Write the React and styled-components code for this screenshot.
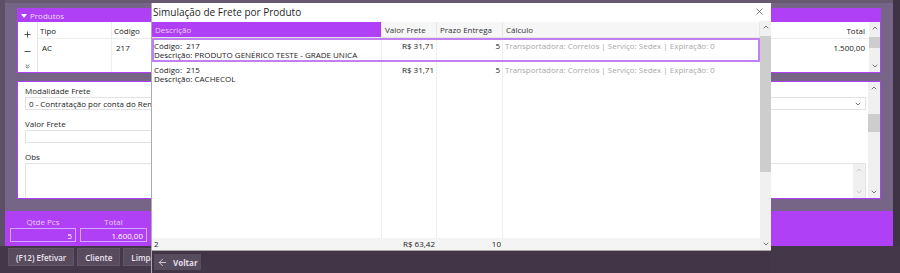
import styled, { createGlobalStyle } from "styled-components";
import { X, ChevronUp, ChevronDown, ChevronsDown, ArrowLeft, Plus, Minus } from "lucide-react";

const GlobalStyle = createGlobalStyle`
  body {
    margin: 0;
    font-family: "Open Sans", "Noto Sans", sans-serif;
  }
  * { box-sizing: border-box; }
`;

const purple = "#b040f5";

const Screen = styled.div`
  position: relative;
  width: 900px;
  height: 273px;
  overflow: hidden;
  display: flex;
  flex-direction: column;
  background: #45374a;
`;

const TopArea = styled.div`
  display: flex;
  height: 246px;
  flex: none;
`;

const LeftRail = styled.div`
  width: 5px;
  background: #5d4f65;
`;

const RightRail = styled.div`
  width: 7px;
  background: #3f3346;
`;

const Workspace = styled.div`
  flex: 1;
  display: flex;
  flex-direction: column;
  background: #766587;
  border-top: 3px solid #67596f;
`;

const Sections = styled.div`
  padding: 5px 12px 0 12px;
  display: flex;
  flex-direction: column;
  gap: 8px;
`;

const Panel = styled.div`
  border: 1px solid ${purple};
  background: #fff;
  display: flex;
  flex-direction: column;
`;

const PanelHeader = styled.div`
  height: 13px;
  background: ${purple};
  color: #f0dcff;
  font-size: 8px;
  display: flex;
  align-items: center;
  gap: 3px;
  padding-left: 3px;
`;

const Triangle = styled.span`
  width: 0;
  height: 0;
  border-left: 3px solid transparent;
  border-right: 3px solid transparent;
  border-top: 4px solid #fff;
`;

const ProductBody = styled.div`
  height: 50px;
  display: flex;
`;

const RowTools = styled.div`
  width: 20px;
  border-right: 1px solid #e4e4e4;
  display: flex;
  flex-direction: column;
  align-items: center;
  justify-content: space-between;
  padding: 8px 0 2px;
  color: #333;
`;

const ProductGrid = styled.div`
  flex: 1;
  display: grid;
  grid-template-columns: 74px 1fr 120px;
  grid-template-rows: 17px 1fr;
  font-size: 8px;
  color: #1a1a1a;
`;

const ProdHead = styled.div`
  display: flex;
  align-items: center;
  padding: 0 ${(p) => (p.$right ? "4px" : "2px")};
  justify-content: ${(p) => (p.$right ? "flex-end" : "flex-start")};
  border-bottom: 1px solid #ececec;
  border-right: ${(p) => (p.$sep ? "1px solid #ececec" : "none")};
`;

const ProdCell = styled.div`
  padding: 3px 4px 0;
  text-align: ${(p) => (p.$right ? "right" : "left")};
  border-right: ${(p) => (p.$sep ? "1px solid #ececec" : "none")};
`;

const ScrollTrack = styled.div`
  width: ${(p) => p.$w || 11}px;
  background: #f0f0f0;
  display: flex;
  flex-direction: column;
  align-items: center;
  justify-content: space-between;
  padding: 2px 0;
  color: ${(p) => (p.$faint ? "#b8b8b8" : "#555")};
  position: relative;
`;

const Thumb = styled.div`
  position: absolute;
  left: 0;
  right: 0;
  top: ${(p) => p.$top}px;
  height: ${(p) => p.$h}px;
  background: #cdcdcd;
`;

const FormBody = styled.div`
  height: 116px;
  display: flex;
`;

const FormMain = styled.div`
  flex: 1;
  padding: 3px 2px 0 7px;
  display: flex;
  flex-direction: column;
`;

const Label = styled.div`
  font-size: 8px;
  color: #1f1f1f;
  height: 11px;
  line-height: 11px;
  margin-bottom: 1px;
`;

const Field = styled.div`
  height: 13px;
  width: ${(p) => p.$w || "100%"};
  border: 1px solid #e2e2e2;
  font-size: 8px;
  color: #1a1a1a;
  display: flex;
  align-items: center;
  justify-content: space-between;
  padding: 0 3px;
  margin-bottom: 8px;
`;

const TextArea = styled.div`
  flex: 1;
  border: 1px solid #e2e2e2;
  border-bottom: none;
  display: flex;
  justify-content: flex-end;
`;

const TotalsBar = styled.div`
  margin-top: auto;
  height: 35px;
  background: ${purple};
  display: flex;
  gap: 4px;
  padding: 5px 0 0 5px;
`;

const TotalGroup = styled.div`
  width: ${(p) => p.$w}px;
  display: flex;
  flex-direction: column;
  align-items: center;
`;

const TotalLabel = styled.div`
  font-size: 8px;
  color: #e8ccff;
  height: 11px;
  line-height: 11px;
  margin-bottom: 1px;
`;

const TotalInput = styled.div`
  width: 100%;
  height: 14px;
  border: 1px solid #d9a6ff;
  color: #fff;
  font-size: 8px;
  text-align: right;
  padding: 1px 3px;
`;

const Toolbar = styled.div`
  display: flex;
  gap: 3px;
  padding: 2px 8px;
`;

const ToolButton = styled.div`
  height: 18px;
  padding: 0 7px;
  background: #584b5e;
  border: 1px solid #62556a;
  color: #ece4f0;
  font-size: 8px;
  font-weight: 600;
  display: flex;
  align-items: center;
  white-space: nowrap;
`;

/* modal */

const Modal = styled.div`
  position: absolute;
  left: 151px;
  top: 3px;
  width: 620px;
  height: 270px;
  display: flex;
  flex-direction: column;
  background: #433548;
  border-left: 1px solid #b0a8b4;
`;

const TitleBar = styled.div`
  height: 18px;
  background: #fff;
  display: flex;
  align-items: center;
  justify-content: space-between;
  padding: 0 6px 0 1px;
  font-size: 10px;
  color: #1f1f1f;
`;

const ModalBody = styled.div`
  height: 232px;
  display: flex;
  background: #fff;
  border-bottom: 1px solid #a8a8a8;
`;

const Grid = styled.div`
  flex: 1;
  display: flex;
  flex-direction: column;
  padding-top: 1px;
`;

const Row = styled.div`
  display: grid;
  grid-template-columns: 230px 55px 66px 1fr;
  height: ${(p) => p.$h}px;
  flex: ${(p) => (p.$fill ? 1 : "none")};
  background: ${(p) => p.$bg || "transparent"};
  outline: ${(p) => (p.$selected ? "2px solid #c27ff2" : "none")};
  outline-offset: -2px;
  font-size: 8px;
  color: #1a1a1a;
`;

const HeadCell = styled.div`
  display: flex;
  align-items: center;
  padding: 0 3px;
  background: ${(p) => (p.$active ? purple : "#f6f6f6")};
  color: ${(p) => (p.$active ? "#ead2ff" : "#333")};
  border-right: 1px solid #e6e6e6;
  border-bottom: 1px solid #e6e6e6;
`;

const Cell = styled.div`
  padding: ${(p) => (p.$tight ? "0 2px" : "3px 2px 0 2px")};
  display: flex;
  flex-direction: column;
  align-items: ${(p) => (p.$right ? "flex-end" : "flex-start")};
  justify-content: ${(p) => (p.$tight ? "center" : "flex-start")};
  line-height: 9.5px;
  color: ${(p) => (p.$muted ? "#a8a8a8" : "#1a1a1a")};
  border-right: ${(p) => (p.$sep ? "1px solid #efefef" : "none")};
  white-space: nowrap;
  overflow: hidden;
`;

const ModalFooter = styled.div`
  flex: 1;
  padding: 3px 2px;
`;

const BackButton = styled.div`
  width: 47px;
  height: 16px;
  background: #574b5e;
  color: #e4dde8;
  font-size: 8px;
  font-weight: 700;
  display: flex;
  align-items: center;
  gap: 5px;
  padding-left: 3px;
`;

const rows = [
  { codigo: "217", desc: "PRODUTO GENÉRICO TESTE - GRADE UNICA", valor: "R$ 31,71", prazo: "5", selected: true },
  { codigo: "215", desc: "CACHECOL", valor: "R$ 31,71", prazo: "5" },
];

const calculo = "Transportadora: Correios | Serviço: Sedex | Expiração: 0";

export default function App() {
  return (
    <Screen>
      <GlobalStyle />
      <TopArea>
        <LeftRail />
        <Workspace>
          <Sections>
            <Panel>
              <PanelHeader>
                <Triangle />
                Produtos
              </PanelHeader>
              <ProductBody>
                <RowTools>
                  <Plus size={9} strokeWidth={2.2} />
                  <Minus size={9} strokeWidth={2.2} />
                  <ChevronsDown size={7} strokeWidth={2.4} />
                </RowTools>
                <ProductGrid>
                  <ProdHead $sep>Tipo</ProdHead>
                  <ProdHead>Código</ProdHead>
                  <ProdHead $right>Total</ProdHead>
                  <ProdCell $sep>AC</ProdCell>
                  <ProdCell>217</ProdCell>
                  <ProdCell $right>1.500,00</ProdCell>
                </ProductGrid>
                <ScrollTrack>
                  <ChevronUp size={8} strokeWidth={2.4} />
                  <Thumb $top={15} $h={11} />
                  <ChevronDown size={8} strokeWidth={2.4} />
                </ScrollTrack>
              </ProductBody>
            </Panel>

            <Panel>
              <FormBody>
                <FormMain>
                  <Label>Modalidade Frete</Label>
                  <Field>
                    <span>0 - Contratação por conta do Remetente (CIF)</span>
                    <ChevronDown size={8} strokeWidth={2.4} color="#555" />
                  </Field>
                  <Label>Valor Frete</Label>
                  <Field $w="320px" />
                  <Label>Obs</Label>
                  <TextArea>
                    <ScrollTrack $w={12} $faint>
                      <ChevronUp size={8} strokeWidth={2} />
                      <ChevronDown size={8} strokeWidth={2} />
                    </ScrollTrack>
                  </TextArea>
                </FormMain>
                <ScrollTrack $w={12}>
                  <ChevronUp size={8} strokeWidth={2.4} />
                  <Thumb $top={32} $h={18} />
                  <ChevronDown size={8} strokeWidth={2.4} />
                </ScrollTrack>
              </FormBody>
            </Panel>
          </Sections>

          <TotalsBar>
            <TotalGroup $w={66}>
              <TotalLabel>Qtde Pcs</TotalLabel>
              <TotalInput>5</TotalInput>
            </TotalGroup>
            <TotalGroup $w={67}>
              <TotalLabel>Total</TotalLabel>
              <TotalInput>1.600,00</TotalInput>
            </TotalGroup>
          </TotalsBar>
        </Workspace>
        <RightRail />
      </TopArea>

      <Toolbar>
        <ToolButton>(F12) Efetivar</ToolButton>
        <ToolButton>Cliente</ToolButton>
        <ToolButton>Limpar P</ToolButton>
      </Toolbar>

      <Modal>
        <TitleBar>
          <span>Simulação de Frete por Produto</span>
          <X size={11} strokeWidth={1.4} color="#444" />
        </TitleBar>
        <ModalBody>
          <Grid>
            <Row $h={16}>
              <HeadCell $active>Descrição</HeadCell>
              <HeadCell>Valor Frete</HeadCell>
              <HeadCell>Prazo Entrega</HeadCell>
              <HeadCell>Cálculo</HeadCell>
            </Row>
            {rows.map((r) => (
              <Row key={r.codigo} $h={24} $selected={r.selected}>
                <Cell $sep>
                  <span>Código:&nbsp; {r.codigo}</span>
                  <span>Descrição: {r.desc}</span>
                </Cell>
                <Cell $sep $right>{r.valor}</Cell>
                <Cell $sep $right>{r.prazo}</Cell>
                <Cell $muted>{calculo}</Cell>
              </Row>
            ))}
            <Row $fill>
              <Cell $sep />
              <Cell $sep />
              <Cell $sep />
              <Cell />
            </Row>
            <Row $h={12} $bg="#f4f4f4">
              <Cell $tight>2</Cell>
              <Cell $tight $right>R$ 63,42</Cell>
              <Cell $tight $right>10</Cell>
              <Cell $tight />
            </Row>
          </Grid>
          <ScrollTrack>
            <ChevronUp size={8} strokeWidth={2.4} />
            <Thumb $top={15} $h={136} />
            <ChevronDown size={8} strokeWidth={2.4} />
          </ScrollTrack>
        </ModalBody>
        <ModalFooter>
          <BackButton>
            <ArrowLeft size={11} strokeWidth={1.8} />
            Voltar
          </BackButton>
        </ModalFooter>
      </Modal>
    </Screen>
  );
}
